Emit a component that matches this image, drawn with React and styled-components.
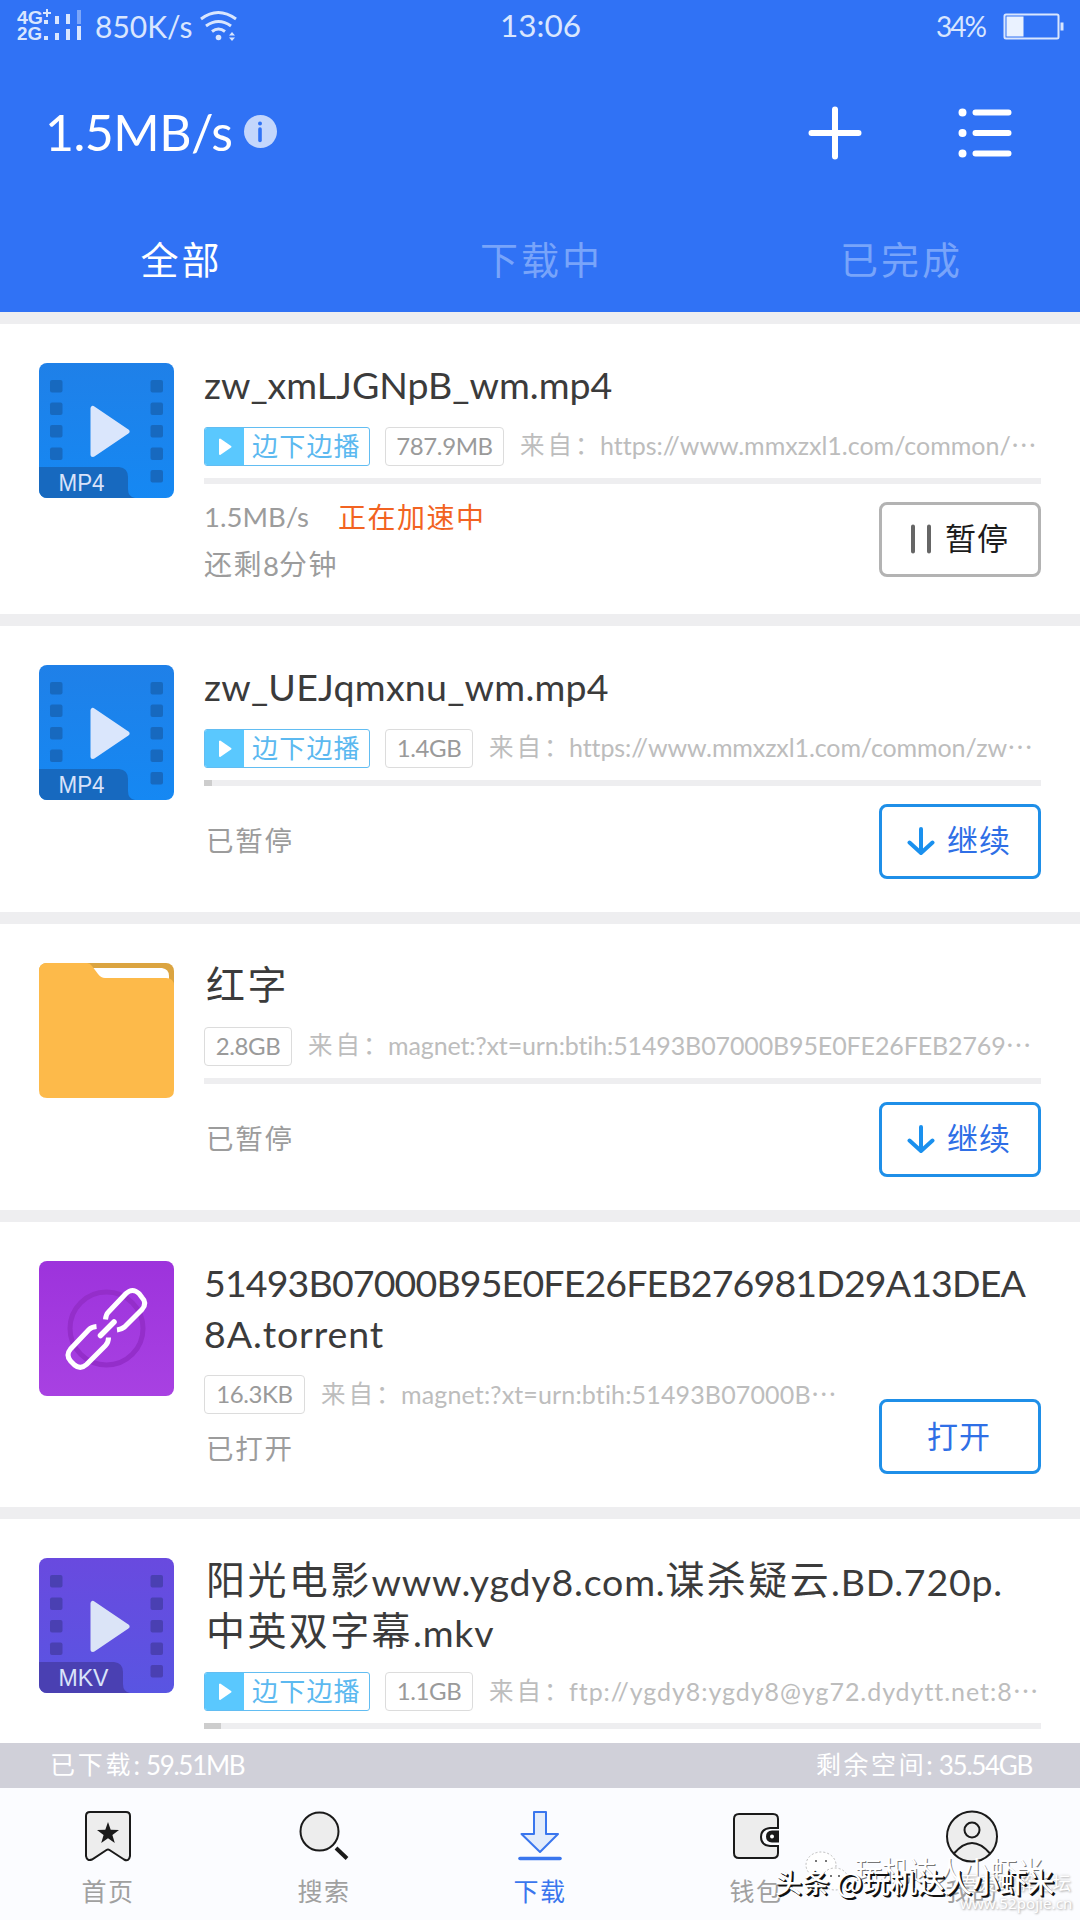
import React from "react";
import styled, { createGlobalStyle } from "styled-components";

const GlobalStyle = createGlobalStyle`
* { box-sizing: border-box; }
body {
    margin: 0;
    background: #fff;
    font-family: Lato, "Noto Sans CJK SC", sans-serif;
    font-variant-ligatures: none;
}
`;

const Screen = styled.div`
width: 1080px;
height: 1920px;
overflow: hidden;
position: relative;
display: flex;
flex-direction: column;
background: #eeeef0;
`;

/* ---------- text ---------- */

const Latin = styled.span`
font-family: Lato, sans-serif;
font-size: ${(props) => props.$size}px;
letter-spacing: ${(props) => props.$track || 0}px;
`;

const Han = styled.span`
font-family: "Noto Sans CJK SC", sans-serif;
font-weight: 400;
font-size: ${(props) => props.$size}px;
letter-spacing: ${(props) => props.$track || 0}px;
vertical-align: 0.04em;
`;

// chinese and latin runs have their own size and tracking
const Mixed = ({ text, size, track, han, hanTrack }) => {
    const runs = text.match(/[\u2026\u3000-\u9fff\uff00-\uffef]+|[^\u2026\u3000-\u9fff\uff00-\uffef]+/g);
    return runs.map((run, i) =>
        /[\u2026\u3000-\uffef]/.test(run) ? (
            <Han key={i} $size={han} $track={hanTrack}>{run}</Han>
        ) : (
            <Latin key={i} $size={size} $track={track}>{run}</Latin>
        )
    );
};

/* ---------- header ---------- */

const Header = styled.header`
height: 312px;
flex: none;
background: #3072f5;
color: #fff;
margin-bottom: 12px;
`;

const StatusBar = styled.div`
height: 54px;
padding: 0 16px 0 17px;
display: grid;
grid-template-columns: 1fr auto 1fr;
align-items: center;
color: #d9e6fe;
`;

const StatusSide = styled.div`
display: flex;
align-items: center;
justify-content: ${(props) => (props.$end ? "flex-end" : "flex-start")};
gap: ${(props) => props.$gap}px;
white-space: pre;
line-height: 37px;
padding-bottom: 2px;
`;

const Clock = styled.div`
line-height: 40px;
padding-top: 2px;
`;

const TopBar = styled.div`
height: 157px;
padding: 0 68px 0 45px;
display: flex;
align-items: center;
`;

const Speed = styled.div`
display: flex;
align-items: center;
gap: 12px;
flex: 1;
line-height: 60px;
padding-bottom: 2px;
`;

const Tools = styled.div`
display: flex;
align-items: center;
gap: 96px;
`;

const Tabs = styled.nav`
display: grid;
grid-template-columns: repeat(3, 1fr);
text-align: center;
line-height: 93px;
`;

const Tab = styled.div`
color: ${(props) => (props.$active ? "#fff" : "#78a4fa")};
padding-left: 3px;
`;

/* ---------- list ---------- */

const Card = styled.section`
height: ${(props) => props.$height}px;
flex: none;
margin-bottom: ${(props) => (props.$last ? 0 : 12)}px;
padding: 36px 39px 0;
background: #fff;
display: flex;
overflow: hidden;
`;

const FileIcon = styled.svg`
width: 135px;
height: 135px;
margin: 3px 30px 0 0;
flex: none;
`;

const Body = styled.div`
flex: 1;
min-width: 0;
white-space: pre;
`;

const Title = styled.h2`
margin: ${(props) => -props.$lift}px 0 ${(props) => 16 + props.$lift}px;
font-weight: 400;
line-height: 50.5px;
color: #3b3b3b;
div { height: 50.5px; }
${Han}:first-child { margin-left: 2px; }
`;

const Meta = styled.div`
display: flex;
align-items: center;
height: 39px;
line-height: 37px;
`;

const PlayTag = styled.div`
width: 166px;
height: 39px;
margin-right: 15px;
display: flex;
border: 1px solid #62bdf2;
border-radius: 3px;
color: #5cb9f0;
overflow: hidden;
line-height: 34px;
flex: none;
svg { background: #5ac8fe; flex: none; margin-right: 8px; }
`;

const SizeTag = styled.div`
width: ${(props) => props.$width}px;
height: 39px;
margin-right: 16px;
border: 1px solid #dcdcdc;
border-radius: 4px;
color: #9a9a9a;
text-align: center;
line-height: 36px;
flex: none;
`;

const Source = styled.div`
color: #bdbdbd;
display: flex;
align-items: baseline;
`;

const SourceLabel = styled.span`
width: 80px;
flex: none;
`;

const Track = styled.div`
height: 6px;
margin: 12px 0 18px;
background: #eeeef0;
`;

const Done = styled.div`
height: 6px;
background: #cdcdcd;
`;

const Foot = styled.div`
height: 75px;
display: flex;
justify-content: space-between;
align-items: center;
`;

const OpenedFoot = styled(Foot)`
height: auto;
align-items: flex-start;
`;

const Status = styled.div`
line-height: 47px;
color: #9c9c9c;
padding-left: ${(props) => props.$indent || 0}px;
padding-top: ${(props) => props.$top || 0}px;
`;

const StatusLine = styled.div`
height: 47px;
display: flex;
gap: 29px;
`;

const Boost = styled.span`
color: #f26322;
`;

const ActionButton = styled.button`
width: 162px;
height: 75px;
padding: 0 2px 5px 0;
border: 3px solid ${(props) => (props.$muted ? "#b3b3b3" : "#1f8fe8")};
border-radius: 8px;
background: #fff;
color: ${(props) => (props.$muted ? "#1c1c1c" : "#2f6fe6")};
display: flex;
align-items: center;
justify-content: center;
gap: 12px;
flex: none;
margin-top: ${(props) => props.$top || 0}px;
svg { margin-top: 5px; }
`;

/* ---------- bottom ---------- */

const StorageBar = styled.div`
height: 45px;
flex: none;
padding: 0 48px 0 50px;
background: #d0d0d9;
color: #fff;
display: flex;
justify-content: space-between;
line-height: 41px;
white-space: pre;
word-spacing: 2px;
`;

const BottomNav = styled.nav`
height: 132px;
flex: none;
background: #fbfcff;
display: grid;
grid-template-columns: repeat(5, 1fr);
`;

const NavItem = styled.div`
padding-top: 20px;
display: flex;
flex-direction: column;
align-items: center;
color: ${(props) => (props.$active ? "#3a76ee" : "#a0a0a0")};
line-height: 53px;
svg { flex: none; overflow: visible; }
`;

const StampMain = styled.div`
position: absolute;
left: 775px;
top: 1862px;
font: 500 27px/40px "Noto Sans CJK SC", sans-serif;
letter-spacing: 0.4px;
white-space: pre;
color: #fff;
text-shadow: 1px 1px 0 #111, 2px 2px 0 #111;
`;

const StampGhost = styled.div`
position: absolute;
left: 855px;
top: 1850px;
font: 400 27px/40px "Noto Sans CJK SC", sans-serif;
color: #fff;
text-shadow: 1px 1px 0 #777;
`;

const StampChat = styled.svg`
position: absolute;
left: 804px;
top: 1848px;
`;

const StampSite = styled.div`
position: absolute;
left: 960px;
top: 1871px;
width: 114px;
color: #fff;
font: 400 18.5px/22px "Noto Sans CJK SC", sans-serif;
white-space: nowrap;
text-shadow: 1px 1px 2px #b5b5b5, 0 0 3px #ccc;
div:last-child { font: 400 15.2px/20px "Noto Sans", sans-serif; }
`;

/* ---------- drawings ---------- */

const Signal = () => (
    <svg width="66" height="36" viewBox="17 10 66 36" fill="#d9e6fe">
        <g fontFamily="Liberation Sans, sans-serif" fontWeight="700" fontSize="18">
            <text x="17" y="26" textLength="26" lengthAdjust="spacingAndGlyphs">4G</text>
            <text x="17" y="42" textLength="25" lengthAdjust="spacingAndGlyphs">2G</text>
        </g>
        <path d="M43 14h8v2h-8zM46 11h2v8h-2zM44 22h4v4h-4zM55 18h4v8h-4zM66 16h4v10h-4z" />
        <path d="M77 12h4v14h-4z" opacity=".45" />
        <path d="M44 38h4v4h-4zM55 35h4v7h-4zM66 31h4v11h-4zM77 28h4v14h-4z" />
    </svg>
);

const WifiSvg = styled.svg`
margin-left: -6px;
`;

const Wifi = () => (
    <WifiSvg width="38" height="32" viewBox="199 11 38 32" fill="none" stroke="#d9e6fe" strokeWidth="3">
        <path d="M201 20q17-13 35 0M206 27q12.500-9 25 0M212 32.500q6.500-5 13 0" />
        <circle cx="218.500" cy="38.500" r="2.800" fill="#d9e6fe" stroke="none" />
        <path d="M229 36.500l3-3.500 3 3.500zM229 38.500l3 3.500 3-3.500z" fill="#d9e6fe" stroke="none" />
    </WifiSvg>
);

const Battery = () => (
    <svg width="61" height="27" viewBox="1003.500 13.500 61 27">
        <rect x="1005" y="15" width="54" height="24" rx="1.500" fill="none" stroke="#d9e6fe" strokeWidth="2" />
        <rect x="1007" y="17" width="17" height="20" fill="#eaf2ff" />
        <rect x="1061" y="23" width="3" height="8" fill="#d9e6fe" />
    </svg>
);

const InfoDot = () => (
    <svg width="33" height="33" viewBox="0 0 33 33">
        <circle cx="16.500" cy="16.500" r="16.500" fill="#c3d6fc" />
        <circle cx="16" cy="8.500" r="2" fill="#3072f5" />
        <path d="M16 14v11.500" stroke="#3072f5" strokeWidth="3.600" strokeLinecap="round" />
    </svg>
);

const Plus = () => (
    <svg width="54" height="54" viewBox="0 0 54 54" stroke="#fff" strokeWidth="6" strokeLinecap="round">
        <path d="M3.500 27h47M27 3.500v47" />
    </svg>
);

const ListIcon = () => (
    <svg width="54" height="54" viewBox="0 0 54 54" stroke="#fff" strokeWidth="6" strokeLinecap="round">
        <path d="M17.500 6.500h33M17.500 27h33M17.500 47.500h33" />
        <path d="M4.500 6.500h.01M4.500 27h.01M4.500 47.500h.01" strokeWidth="8" />
    </svg>
);

const VIDEO = {
    MP4: { top: "#1f80e8", bottom: "#1588f3", dark: "#1769bf", play: "#dae6fc", tab: 89, len: 45 },
    MKV: { top: "#694adf", bottom: "#5955e2", dark: "#4a40b2", play: "#dbe4f7", tab: 84, len: 49 },
};

const VideoIcon = ({ kind }) => {
    const c = VIDEO[kind];
    return (
        <FileIcon viewBox="0 0 135 135">
            <defs>
                <linearGradient id={"bg" + kind} x1="0" y1="0" x2="0" y2="1">
                    <stop offset="0" stopColor={c.top} />
                    <stop offset="1" stopColor={c.bottom} />
                </linearGradient>
                <clipPath id={"clip" + kind}><rect width="135" height="135" rx="8" /></clipPath>
            </defs>
            <g clipPath={`url(#clip${kind})`}>
                <rect width="135" height="135" fill={`url(#bg${kind})`} />
                {[17, 39.5, 62, 84.5, 107].map((y, i) => (
                    <g key={y} fill={c.dark}>
                        {i < 4 && <rect x="11" y={y} width="12.500" height="12.500" rx="2" />}
                        <rect x="111.500" y={y} width="12.500" height="12.500" rx="2" />
                    </g>
                ))}
                <path
                    d={`M0 104H${c.tab - 9}q9 1 9 10v12q0 8 7 9H0z`}
                    fill={c.dark}
                />
            </g>
            <path d="M54 45.500v46L88 68.500z" fill={c.play} stroke={c.play} strokeWidth="5" strokeLinejoin="round" />
            <text x="19.500" y="128.400" fontFamily="Liberation Sans, sans-serif" fontSize="24" fill="#d9e3fa" textLength={c.len + 1} lengthAdjust="spacingAndGlyphs">{kind}</text>
        </FileIcon>
    );
};

const FolderIcon = () => (
    <FileIcon viewBox="0 0 135 135">
        <rect width="135" height="60" rx="8" fill="#dba440" />
        <path d="M52 5h71q7 1 7 8v12H52z" fill="#fff" />
        <path d="M8 0h40q3 0 5 3l6 8q3 4 7 4h61q8 0 8 8v104q0 8-8 8H8q-8 0-8-8V8q0-8 8-8z" fill="#fdba4a" />
    </FileIcon>
);

const TorrentIcon = () => (
    <FileIcon viewBox="0 0 135 135" fill="none">
        <defs>
            <linearGradient id="bgTorrent" x1="0" y1="0" x2="0" y2="1">
                <stop offset="0" stopColor="#9d33dc" />
                <stop offset="1" stopColor="#a841e2" />
            </linearGradient>
        </defs>
        <rect width="135" height="135" rx="8" fill="url(#bgTorrent)" />
        <circle cx="67.500" cy="67.500" r="36.500" stroke="#942eca" strokeWidth="5" />
        <g stroke="#fff" strokeWidth="5" strokeLinejoin="round">
            <path d="M66.500 58.500q.5-5 2.500-7L87 32.500q6.500-6 13 0l3 4q5.500 5.500 0 12L85.500 66q-3 2.500-7.500 3" />
            <path d="M57.500 65.500q-5 .5-7.500 3L31.500 88q-5 6 0 12l4 4q6 5 12-.5L66.500 84.500q3-3 3-8" />
            <path d="M61.500 74.500L75 61" strokeLinecap="round" strokeWidth="5.500" />
        </g>
    </FileIcon>
);

const ICONS = {
    mp4: <VideoIcon kind="MP4" />,
    mkv: <VideoIcon kind="MKV" />,
    folder: <FolderIcon />,
    torrent: <TorrentIcon />,
};

const PauseGlyph = () => (
    <svg width="24" height="30" viewBox="0 0 24 30" stroke="#666" strokeWidth="4" strokeLinecap="round">
        <path d="M4 2.500v25M20 2.500v25" />
    </svg>
);

const DownGlyph = () => (
    <svg width="28" height="30" viewBox="0 0 28 30" fill="none" stroke="#1a90ee" strokeWidth="4" strokeLinecap="round" strokeLinejoin="round">
        <path d="M14 3v24M2.500 16.500L14 27l11.500-10.500" />
    </svg>
);

const HomeIcon = () => (
    <svg width="50" height="56" viewBox="0 0 50 56" stroke="#1a1a1a" strokeWidth="2">
        <path d="M7 4h36q4 0 4 4v40q-1 6-6 3.500L26.500 42q-1.500-1-3 0L9 51.500q-5 2-6-3.500V8q0-4 4-4z" fill="#ededed" />
        <path d="M25 14l2.700 7.800 8.300.1-6.600 5 2.400 8-6.800-4.700-6.800 4.700 2.400-8-6.600-5 8.300-.1z" fill="#1a1a1a" stroke="none" />
    </svg>
);

const SearchIcon = () => (
    <svg width="50" height="56" viewBox="0 0 50 56">
        <circle cx="20.500" cy="23.500" r="19" fill="#ededed" stroke="#1a1a1a" strokeWidth="2" />
        <path d="M37 40l11 10.500" stroke="#1a1a1a" strokeWidth="4" />
    </svg>
);

const DownloadIcon = () => (
    <svg width="50" height="56" viewBox="0 0 50 56" stroke="#3a76ee" strokeLinecap="round" strokeLinejoin="round">
        <path d="M19 4h12v22h12L25 44 6.500 26H19z" fill="#e3ecfb" strokeWidth="2" />
        <path d="M5 50.500h40" strokeWidth="3.600" />
    </svg>
);

const WalletIcon = () => (
    <svg width="50" height="56" viewBox="0 0 50 56">
        <path d="M8 6h34q5 0 5 5v9h-8q-9 1-9 9t9 9h8v7q0 5-5 5H8q-5 0-5-5V11q0-5 5-5z" fill="#ededed" stroke="#1a1a1a" strokeWidth="2" />
        <path d="M48 22.500h-7q-6 .5-6 6t6 6h7z" fill="#1a1a1a" />
        <circle cx="41" cy="28.500" r="2" fill="#fff" />
    </svg>
);

const UserIcon = () => (
    <svg width="54" height="56" viewBox="0 0 54 56" fill="#ededed" stroke="#1a1a1a" strokeWidth="2">
        <circle cx="27" cy="28.500" r="25" />
        <circle cx="27" cy="22" r="7.500" />
        <path d="M9 45.500q18-21 36 0" fill="none" />
    </svg>
);

/* ---------- data ---------- */

const files = [
    {
        icon: "mp4", height: 290, title: [{ text: "zw_xmLJGNpB_wm.mp4", track: 0 }], play: true, size: "787.9MB", sizeWidth: 119,
        source: "https://www.mmxzxl1.com/common/…", sourceTrack: 0, done: 0, speed: "1.5MB/s", left: "还剩8分钟", action: "暂停",
    },
    {
        icon: "mp4", height: 286, title: [{ text: "zw_UEJqmxnu_wm.mp4", track: 0.25 }], play: true, size: "1.4GB", sizeWidth: 88,
        source: "https://www.mmxzxl1.com/common/zw…", sourceTrack: -0.1, done: 8, status: "已暂停", action: "继续",
    },
    {
        icon: "folder", height: 286, title: [{ text: "红字", track: 0 }], lift: 3, size: "2.8GB", sizeWidth: 88,
        source: "magnet:?xt=urn:btih:51493B07000B95E0FE26FEB2769…", sourceTrack: -0.12, done: 0, status: "已暂停", action: "继续",
    },
    {
        icon: "torrent", height: 285,
        title: [{ text: "51493B07000B95E0FE26FEB276981D29A13DEA", track: -0.85 }, { text: "8A.torrent", track: 0.9 }],
        size: "16.3KB", sizeWidth: 101,
        source: "magnet:?xt=urn:btih:51493B07000B…", sourceTrack: 0.15, status: "已打开", action: "打开", opened: true,
    },
    {
        icon: "mkv", height: 224, lift: 3,
        title: [{ text: "阳光电影www.ygdy8.com.谋杀疑云.BD.720p.", track: 0.8 }, { text: "中英双字幕.mkv", track: 0.8 }],
        play: true, size: "1.1GB", sizeWidth: 88,
        source: "ftp://ygdy8:ygdy8@yg72.dydytt.net:8…", sourceTrack: 0.95, done: 17,
    },
];

const navItems = [
    { label: "首页", icon: <HomeIcon /> },
    { label: "搜索", icon: <SearchIcon /> },
    { label: "下载", icon: <DownloadIcon />, active: true },
    { label: "钱包", icon: <WalletIcon /> },
    { label: "我的", icon: <UserIcon /> },
];

const FileMeta = ({ file }) => (
    <Meta>
        {file.play && (
            <PlayTag>
                <svg width="39" height="38" viewBox="0 0 39 38"><path d="M15 11.500v14.500L25.500 18.800z" fill="#fff" stroke="#fff" strokeWidth="2" strokeLinejoin="round" /></svg>
                <Han $size={26} $track={1.2}>边下边播</Han>
            </PlayTag>
        )}
        <SizeTag $width={file.sizeWidth}><Latin $size={24} $track={-0.4}>{file.size}</Latin></SizeTag>
        <Source>
            <SourceLabel><Han $size={24.5} $track={3}>来自：</Han></SourceLabel>
            <Mixed text={file.source} size={25} track={file.sourceTrack} han={26} />
        </Source>
    </Meta>
);

const Action = ({ file, top }) => (
    <ActionButton $muted={file.action === "暂停"} $top={top}>
        {file.action === "暂停" && <PauseGlyph />}
        {file.action === "继续" && <DownGlyph />}
        <Han $size={31} $track={1}>{file.action}</Han>
    </ActionButton>
);

const FileCard = ({ file, last }) => (
    <Card $height={file.height} $last={last}>
        {ICONS[file.icon]}
        <Body>
            <Title $lift={file.lift || 0}>
                {file.title.map((line) => (
                    <div key={line.text}><Mixed text={line.text} size={37.5} track={line.track} han={39} hanTrack={2.4} /></div>
                ))}
            </Title>
            {file.opened ? (
                <OpenedFoot>
                    <div>
                        <FileMeta file={file} />
                        <Status $indent={2} $top={10}><Han $size={27.5} $track={1.8}>{file.status}</Han></Status>
                    </div>
                    <Action file={file} top={24} />
                </OpenedFoot>
            ) : (
                <>
                    <FileMeta file={file} />
                    <Track><Done style={{ width: file.done }} /></Track>
                    {file.action && (
                        <Foot>
                            {file.speed ? (
                                <Status $top={2}>
                                    <StatusLine>
                                        <Latin $size={27.5}>{file.speed}</Latin>
                                        <Boost><Han $size={28} $track={1.5}>正在加速中</Han></Boost>
                                    </StatusLine>
                                    <StatusLine><span><Mixed text={file.left} size={27.5} han={28} hanTrack={1.5} /></span></StatusLine>
                                </Status>
                            ) : (
                                <Status $indent={2} $top={3}><Han $size={27.5} $track={1.8}>{file.status}</Han></Status>
                            )}
                            <Action file={file} />
                        </Foot>
                    )}
                </>
            )}
        </Body>
    </Card>
);

const App = () => (
    <Screen>
        <GlobalStyle />
        <Header>
            <StatusBar>
                <StatusSide $gap={12}>
                    <Signal />
                    <Latin $size={30}>850K/s</Latin>
                    <Wifi />
                </StatusSide>
                <Clock><Latin $size={31.5}>13:06</Latin></Clock>
                <StatusSide $end $gap={18}>
                    <Latin $size={28} $track={-2}>34%</Latin>
                    <Battery />
                </StatusSide>
            </StatusBar>
            <TopBar>
                <Speed><Latin $size={50} $track={-0.5}>1.5MB/s</Latin><InfoDot /></Speed>
                <Tools><Plus /><ListIcon /></Tools>
            </TopBar>
            <Tabs>
                <Tab $active><Han $size={38} $track={3}>全部</Han></Tab>
                <Tab><Han $size={38} $track={3}>下载中</Han></Tab>
                <Tab><Han $size={38} $track={3}>已完成</Han></Tab>
            </Tabs>
        </Header>

        {files.map((file, i) => (
            <FileCard key={i} file={file} last={i === files.length - 1} />
        ))}

        <StorageBar>
            <span><Mixed text="已下载: 59.51MB" size={26} track={-1.3} han={25} hanTrack={2.8} /></span>
            <span><Mixed text="剩余空间: 35.54GB" size={26} track={-1.3} han={25} hanTrack={2.6} /></span>
        </StorageBar>
        <BottomNav>
            {navItems.map((item) => (
                <NavItem key={item.label} $active={item.active}>
                    {item.icon}
                    <Han $size={25} $track={1.5}>{item.label}</Han>
                </NavItem>
            ))}
        </BottomNav>

        <StampChat width="48" height="48" viewBox="0 0 48 48" fill="#fff" stroke="#bbb" strokeWidth="1" strokeDasharray="2 2">
            <ellipse cx="17" cy="17" rx="15" ry="13" />
            <ellipse cx="31" cy="31" rx="13" ry="11" />
            <path d="M11 13h2M21 13h2M26 28h2M34 28h2" stroke="#777" strokeWidth="2" strokeDasharray="none" />
        </StampChat>
        <StampGhost>玩机达人小虾米</StampGhost>
        <StampSite>
            <div>吾爱破解论坛</div>
            <div>www.52pojie.cn</div>
        </StampSite>
        <StampMain>头条 @玩机达人小虾米</StampMain>
    </Screen>
);

export default App;
